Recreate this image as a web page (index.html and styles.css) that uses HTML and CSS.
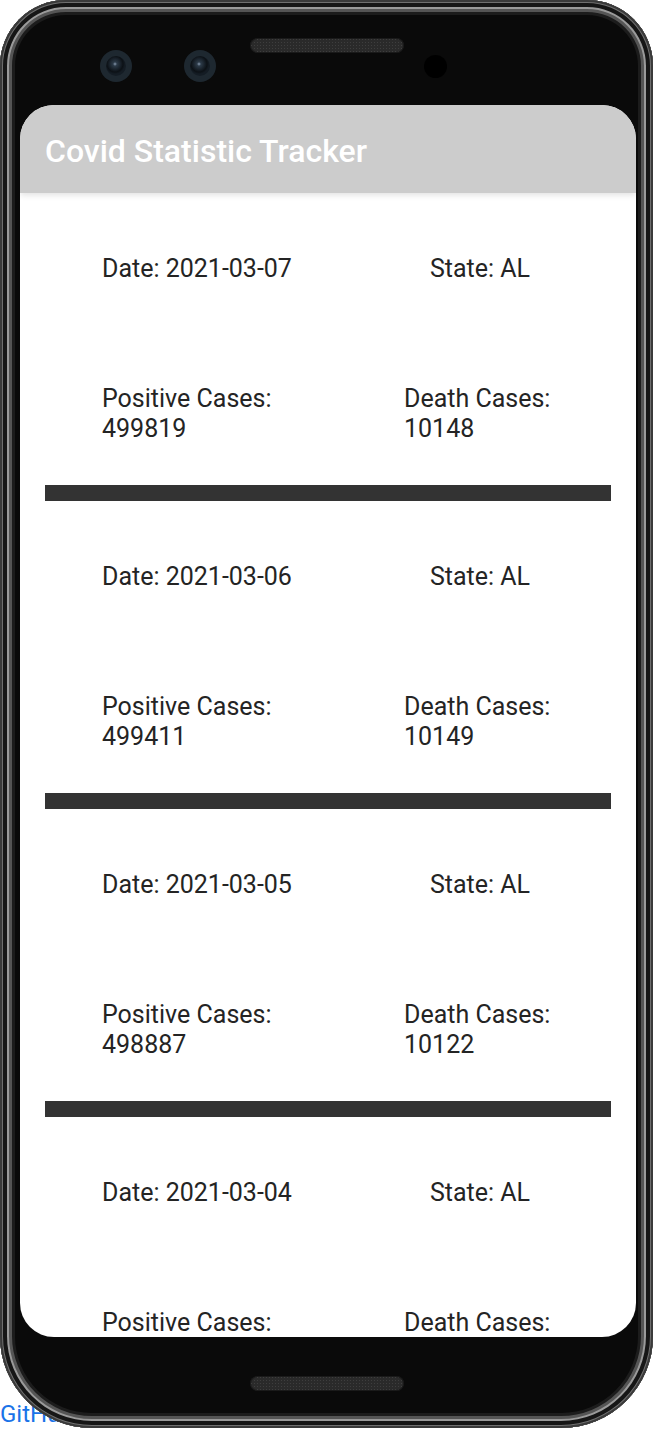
FILE: index.html
```html
<!DOCTYPE html>
<html lang="en">
<head>
<meta charset="utf-8">
<title>Covid Statistic Tracker</title>
<link rel="stylesheet" href="styles.css">
</head>
<body>
<div class="page">
  <div class="phone">
    <div class="bezel-top">
      <div class="camera cam-1"><div class="lens"></div></div>
      <div class="camera cam-2"><div class="lens"></div></div>
      <div class="speaker speaker-top"></div>
      <div class="sensor"></div>
    </div>
    <div class="screen">
      <header class="appbar"><h1 class="title">Covid Statistic Tracker</h1></header>
      <main class="list">
        <section class="item">
          <div class="cell">Date: 2021-03-07</div>
          <div class="cell cell-state">State: AL</div>
          <div class="cell">Positive Cases:<br>499819</div>
          <div class="cell">Death Cases:<br>10148</div>
        </section>
        <div class="divider"></div>
        <section class="item">
          <div class="cell">Date: 2021-03-06</div>
          <div class="cell cell-state">State: AL</div>
          <div class="cell">Positive Cases:<br>499411</div>
          <div class="cell">Death Cases:<br>10149</div>
        </section>
        <div class="divider"></div>
        <section class="item">
          <div class="cell">Date: 2021-03-05</div>
          <div class="cell cell-state">State: AL</div>
          <div class="cell">Positive Cases:<br>498887</div>
          <div class="cell">Death Cases:<br>10122</div>
        </section>
        <div class="divider"></div>
        <section class="item">
          <div class="cell">Date: 2021-03-04</div>
          <div class="cell cell-state">State: AL</div>
          <div class="cell">Positive Cases:<br>498460</div>
          <div class="cell">Death Cases:<br>10105</div>
        </section>
        <div class="divider"></div>
      </main>
    </div>
    <div class="bezel-bottom">
      <div class="speaker speaker-bottom"></div>
    </div>
  </div>
  <a class="repo-link" href="#">GitHub</a>
</div>
</body>
</html>
```

FILE: styles.css
```css
html, body {
  margin: 0;
  padding: 0;
  background: #ffffff;
}

body {
  font-family: Roboto, "Liberation Sans", sans-serif;
  overflow: hidden;
  height: 1430px;
}

.page {
  display: flex;
  flex-direction: column;
  width: 653px;
}

.phone {
  position: relative;
  z-index: 1;
  width: 653px;
  height: 1428px;
  box-sizing: border-box;
  border-radius: 66px 66px 92px 92px;
  background: #0a0a0a;
  display: flex;
  flex-direction: column;
  box-shadow:
    inset 0 0 0 2px #3a3a3a,
    inset 0 0 0 3px #6f6f6f,
    inset 0 0 0 7px #161616,
    inset 0 0 0 9px #9a9a9a,
    inset 0 0 0 12px #555555,
    inset 0 0 0 15px #1c1c1c;
}

.bezel-top {
  height: 105px;
  display: flex;
  align-items: flex-start;
  flex-shrink: 0;
}

.camera {
  width: 32px;
  height: 32px;
  border-radius: 50%;
  background: #1e2830;
  margin-top: 50px;
  display: flex;
  align-items: center;
  justify-content: center;
}

.cam-1 { margin-left: 100px; }
.cam-2 { margin-left: 52px; }

.lens {
  width: 20px;
  height: 20px;
  border-radius: 50%;
  background: radial-gradient(circle at 45% 40%, #8a9bb0 0, #2c3a48 2px, #0c1116 8px, #141c24 10px);
}

.speaker {
  width: 154px;
  height: 15px;
  border-radius: 8px;
  background-color: #2a2a2a;
  background-image: radial-gradient(circle, #3e3e3e 0.8px, transparent 1px);
  background-size: 3px 3px;
  box-shadow: inset 0 0 0 1px #1a1a1a;
}

.speaker-top {
  margin-left: 34px;
  margin-top: 38px;
}

.sensor {
  width: 23px;
  height: 23px;
  border-radius: 50%;
  background: #000000;
  margin-left: 20px;
  margin-top: 55px;
}

.screen {
  margin: 0 17px 0 20px;
  height: 1232px;
  flex-shrink: 0;
  border-radius: 34px;
  overflow: hidden;
  background: #ffffff;
  display: flex;
  flex-direction: column;
}

.appbar {
  height: 88px;
  flex-shrink: 0;
  box-sizing: border-box;
  background: #cccccc;
  display: flex;
  align-items: center;
  padding: 4px 0 0 25px;
  box-shadow: 0 2px 6px rgba(0, 0, 0, 0.12);
  position: relative;
  z-index: 1;
}

.title {
  margin: 0;
  color: #ffffff;
  font-family: Roboto, "Liberation Sans", sans-serif;
  font-weight: 500;
  font-size: 32px;
  line-height: 38px;
}

.list {
  display: flex;
  flex-direction: column;
}

.item {
  display: grid;
  grid-template-columns: 302px 1fr;
  grid-template-rows: 30px 60px;
  row-gap: 100px;
  padding: 61px 0 41px 82px;
  color: #242424;
  font-size: 25px;
  line-height: 30px;
}

.cell-state {
  padding-left: 26px;
}

.divider {
  height: 16px;
  margin: 0 25px;
  background: #333333;
  flex-shrink: 0;
}

.bezel-bottom {
  flex: 1;
  display: flex;
  justify-content: flex-start;
}

.speaker-bottom {
  margin-left: 250px;
  margin-top: 39px;
}

.repo-link {
  display: block;
  margin-top: -28px;
  color: #1a73e8;
  text-decoration: none;
  font-size: 24px;
  line-height: 28px;
}
```
